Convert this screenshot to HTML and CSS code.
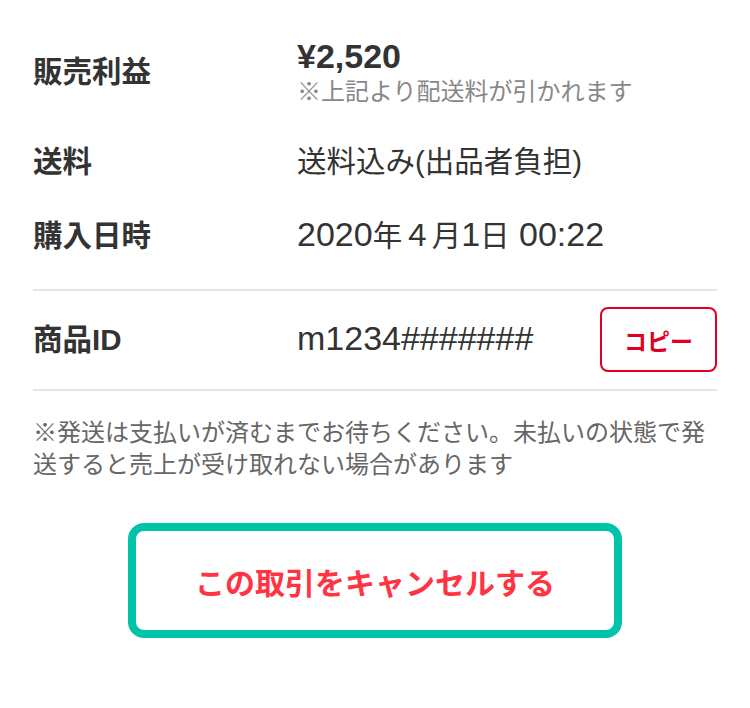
FILE: index.html
```html
<!DOCTYPE html>
<html lang="ja">
<head>
    <meta charset="UTF-8">
    <meta name="viewport" content="width=device-width, initial-scale=1.0">
    <title>取引画面</title>
    <link rel="stylesheet" href="styles.css">
</head>
<body>
    <div class="trade-container">
        <!-- 取引情報 -->
        <div class="info-list">
            <div class="info-row">
                <div class="info-label">販売利益</div>
                <div class="info-value">
                    <div class="price">¥2,520</div>
                    <div class="price-note">※上記より配送料が引かれます</div>
                </div>
            </div>
            <div class="info-row">
                <div class="info-label">送料</div>
                <div class="info-value">送料込み(出品者負担)</div>
            </div>
            <div class="info-row">
                <div class="info-label">購入日時</div>
                <div class="info-value"><span class="num">2020</span>年４月<span class="num">1</span>日<span class="num"> 00:22</span></div>
            </div>
        </div>

        <!-- 商品ID -->
        <div class="id-row">
            <div class="info-label">商品ID</div>
            <div class="info-value"><span class="num">m1234#######</span></div>
            <button class="copy-btn">コピー</button>
        </div>

        <p class="notice">※発送は支払いが済むまでお待ちください。未払いの状態で発送すると売上が受け取れない場合があります</p>

        <div class="cancel-wrap">
            <button class="cancel-btn">この取引をキャンセルする</button>
        </div>
    </div>
</body>
</html>
```

FILE: styles.css
```css
:root {
    --text-color: #333333;
    --sub-text: #888888;
    --notice-text: #666666;
    --border-color: #e5e5e5;
    --copy-red: #e0001f;
    --cancel-red: #ff3341;
    --focus-teal: #00c3aa;
}

body {
    font-family: 'Liberation Sans', 'Noto Sans CJK JP', sans-serif;
    color: var(--text-color);
    background: #ffffff;
    margin: 0;
}

.trade-container {
    padding: 0 33px;
}

.info-list {
    display: flex;
    flex-direction: column;
    gap: 34px;
    padding: 36px 0 33px;
    border-bottom: 2px solid var(--border-color);
}

.info-row,
.id-row {
    display: flex;
    align-items: center;
}

.info-label {
    width: 264px;
    flex-shrink: 0;
    font-size: 29.5px;
    font-weight: bold;
    line-height: 40px;
}

.info-value {
    font-size: 29.5px;
    line-height: 40px;
    height: 40px;
}

/* 半角英数字は少し大きめに */
.num {
    font-size: 34px;
    line-height: 1;
}

.price {
    font-size: 34px;
    font-weight: bold;
    line-height: 40px;
}

.price-note {
    font-size: 24px;
    line-height: 32px;
    color: var(--sub-text);
}

.info-row:first-child .info-value {
    height: auto;
}

.id-row {
    padding: 16px 0 17px;
    border-bottom: 2px solid var(--border-color);
}

.copy-btn {
    margin-left: auto;
    width: 117px;
    height: 65px;
    background: #ffffff;
    border: 2px solid var(--copy-red);
    border-radius: 8px;
    color: var(--copy-red);
    font-family: inherit;
    font-size: 23px;
    font-weight: bold;
    cursor: pointer;
}

.notice {
    margin: 26px 0 42px;
    font-size: 24px;
    line-height: 32px;
    color: var(--notice-text);
}

.cancel-wrap {
    display: flex;
    justify-content: center;
}

.cancel-btn {
    width: 494px;
    height: 115px;
    background: #ffffff;
    border: 8px solid var(--focus-teal);
    border-radius: 16px;
    color: var(--cancel-red);
    font-family: 'Noto Sans CJK JP', sans-serif;
    font-size: 30px;
    font-weight: bold;
    cursor: pointer;
}
```
